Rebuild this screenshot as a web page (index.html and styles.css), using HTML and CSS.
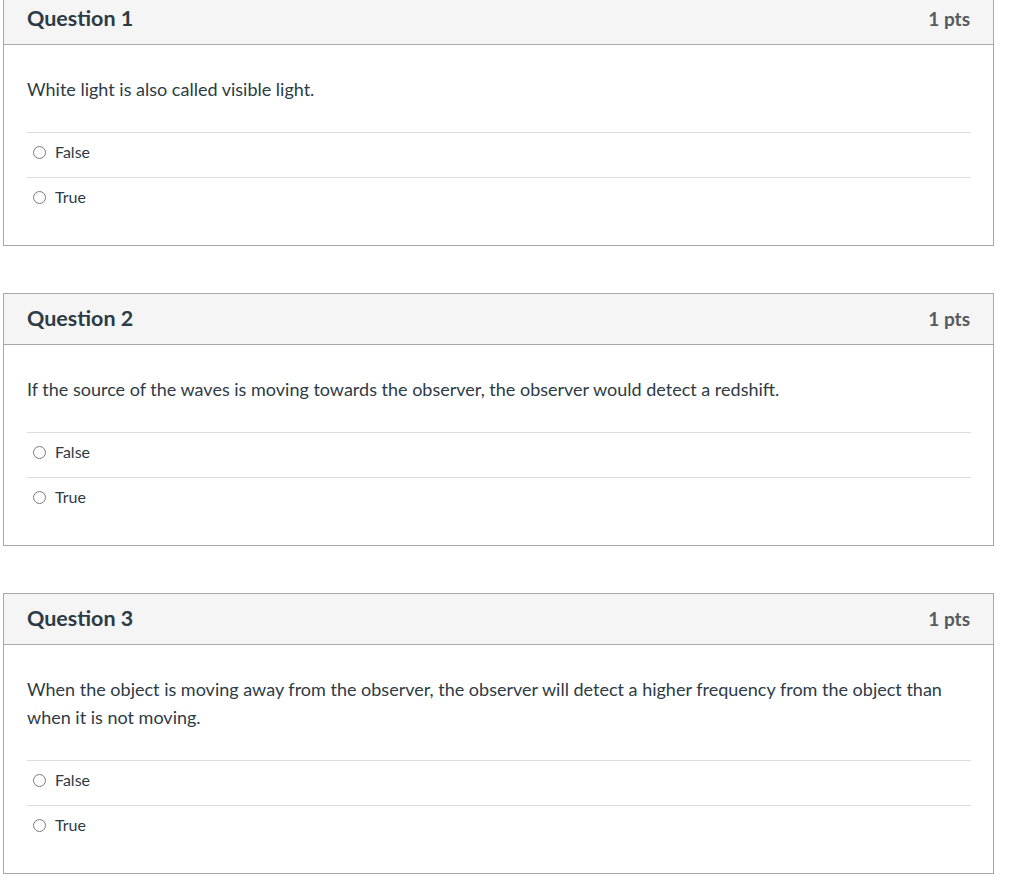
FILE: index.html
```html
<!DOCTYPE html>
<html lang="en">
<head>
<meta charset="utf-8">
<title>Quiz</title>
<link rel="stylesheet" href="styles.css">
</head>
<body>
<div class="quiz">
  <section class="question">
    <header class="q-header">
      <h2 class="q-title">Question 1</h2>
      <span class="q-points">1 pts</span>
    </header>
    <div class="q-body">
      <p class="q-text">White light is also called visible light.</p>
      <ul class="answers">
        <li class="answer"><span class="radio"></span><span class="label">False</span></li>
        <li class="answer"><span class="radio"></span><span class="label">True</span></li>
      </ul>
    </div>
  </section>
  <section class="question">
    <header class="q-header">
      <h2 class="q-title">Question 2</h2>
      <span class="q-points">1 pts</span>
    </header>
    <div class="q-body">
      <p class="q-text">If the source of the waves is moving towards the observer, the observer would detect a redshift.</p>
      <ul class="answers">
        <li class="answer"><span class="radio"></span><span class="label">False</span></li>
        <li class="answer"><span class="radio"></span><span class="label">True</span></li>
      </ul>
    </div>
  </section>
  <section class="question">
    <header class="q-header">
      <h2 class="q-title">Question 3</h2>
      <span class="q-points">1 pts</span>
    </header>
    <div class="q-body">
      <p class="q-text">When the object is moving away from the observer, the observer will detect a higher frequency from the object than when it is not moving.</p>
      <ul class="answers">
        <li class="answer"><span class="radio"></span><span class="label">False</span></li>
        <li class="answer"><span class="radio"></span><span class="label">True</span></li>
      </ul>
    </div>
  </section>
</div>
</body>
</html>
```
FILE: styles.css
```css
html, body {
  margin: 0;
  padding: 0;
  background: #ffffff;
}
body {
  font-family: Lato, "Open Sans", "Liberation Sans", sans-serif;
  color: #2d3b45;
  overflow: hidden;
}
.quiz {
  margin: -7px 0 0 3px;
  width: 991px;
  display: flex;
  flex-direction: column;
  gap: 47px;
}
.question {
  border: 1px solid #a8a8a8;
  background: #fff;
}
.q-header {
  height: 51px;
  box-sizing: border-box;
  background: #f5f5f5;
  border-bottom: 1px solid #a8a8a8;
  display: flex;
  align-items: center;
  justify-content: space-between;
  padding: 0 23px 2px 23px;
}
.q-title {
  margin: 0;
  font-size: 21.5px;
  font-weight: 700;
  color: #2d3b45;
}
.q-points {
  font-size: 19px;
  font-weight: 700;
  color: #555a5e;
}
.q-body {
  padding: 30px 22px 23px 23px;
}
.q-text {
  margin: 0 0 29px;
  font-size: 18px;
  line-height: 28px;
}
.answers {
  list-style: none;
  margin: 0;
  padding: 0;
}
.answer {
  border-top: 1px solid #dcdcdc;
  height: 44px;
  display: flex;
  align-items: center;
  font-size: 16px;
}
.radio {
  width: 13px;
  height: 13px;
  box-sizing: border-box;
  border: 1.5px solid #7a7a7a;
  border-radius: 50%;
  margin-left: 6px;
  margin-right: 9px;
  margin-top: -6px;
}
.label {
  margin-top: -8px;
}
```
